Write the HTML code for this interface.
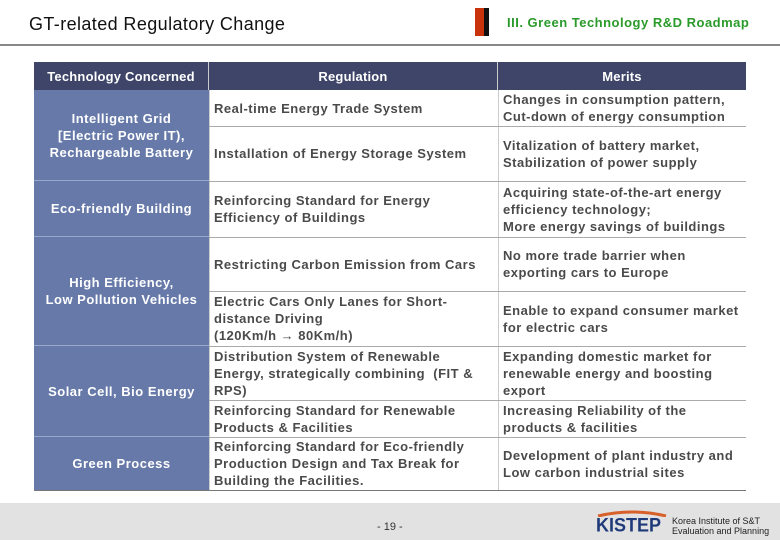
<!DOCTYPE html>
<html><head><meta charset="utf-8"><style>
body{margin:0;width:780px;height:540px;background:#fff;position:relative;overflow:hidden;font-family:"Liberation Sans",Arial,sans-serif}
.a{position:absolute}
.t{position:absolute;font-size:13px;font-weight:bold;color:#4a4a4a;line-height:17px;display:flex;align-items:center;letter-spacing:0.5px;white-space:nowrap}
.l{position:absolute;left:34px;width:175px;background:#6679a9;color:#fff;font-size:13px;font-weight:bold;line-height:17px;display:flex;align-items:center;justify-content:center;text-align:center;border-bottom:1px solid #9aa8c8;box-sizing:border-box;letter-spacing:0.5px}
.h{position:absolute;top:62px;height:28px;background:#3e4568;color:#fff;font-size:13px;font-weight:bold;display:flex;align-items:center;justify-content:center;letter-spacing:0.2px}
.hl{position:absolute;height:1px;background:#aaa}
</style></head><body>
<div class="a" style="left:29px;top:14px;font-size:18px;color:#111;letter-spacing:0.4px">GT-related Regulatory Change</div>
<div class="a" style="left:475px;top:8px;width:9px;height:28px;background:#c8330c"></div>
<div class="a" style="left:484px;top:8px;width:5px;height:28px;background:#111"></div>
<div class="a" style="left:507px;top:15px;font-size:13px;font-weight:bold;color:#2a9a2a;letter-spacing:0.5px">III. Green Technology R&amp;D Roadmap</div>
<div class="a" style="left:0;top:44px;width:780px;height:2px;background:#888"></div>

<div class="h" style="left:34px;width:174px">Technology Concerned</div>
<div class="h" style="left:209px;width:288px">Regulation</div>
<div class="h" style="left:498px;width:248px">Merits</div>
<div class="a" style="left:208px;top:62px;width:1px;height:28px;background:#ccc"></div>
<div class="a" style="left:497px;top:62px;width:1px;height:28px;background:#ccc"></div>

<div class="l" style="top:90px;height:91px">Intelligent Grid<br>[Electric Power IT),<br>Rechargeable Battery</div>
<div class="l" style="top:181px;height:56px">Eco-friendly Building</div>
<div class="l" style="top:237px;height:109px">High Efficiency,<br>Low Pollution Vehicles</div>
<div class="l" style="top:346px;height:91px">Solar Cell, Bio Energy</div>
<div class="l" style="top:437px;height:53px;border-bottom:none">Green Process</div>

<div class="a" style="left:209px;top:90px;width:1px;height:400px;background:#ccc"></div>
<div class="a" style="left:498px;top:90px;width:1px;height:400px;background:#ccc"></div>
<div class="hl" style="left:209px;top:126px;width:537px"></div>
<div class="hl" style="left:209px;top:181px;width:537px"></div>
<div class="hl" style="left:209px;top:237px;width:537px"></div>
<div class="hl" style="left:209px;top:291px;width:537px"></div>
<div class="hl" style="left:209px;top:346px;width:537px"></div>
<div class="hl" style="left:209px;top:400px;width:537px"></div>
<div class="hl" style="left:209px;top:437px;width:537px"></div>
<div class="a" style="left:34px;top:490px;width:712px;height:1px;background:#777"></div>

<div class="t" style="left:214px;top:90px;height:36px">Real-time Energy Trade System</div>
<div class="t" style="left:214px;top:126px;height:55px">Installation of Energy Storage System</div>
<div class="t" style="left:214px;top:181px;height:56px">Reinforcing Standard for Energy<br>Efficiency of Buildings</div>
<div class="t" style="left:214px;top:237px;height:54px">Restricting Carbon Emission from Cars</div>
<div class="t" style="left:214px;top:291px;height:55px">Electric Cars Only Lanes for Short-<br>distance Driving<br>(120Km/h → 80Km/h)</div>
<div class="t" style="left:214px;top:346px;height:54px">Distribution System of Renewable<br>Energy, strategically combining &nbsp;(FIT &amp;<br>RPS)</div>
<div class="t" style="left:214px;top:400px;height:37px">Reinforcing Standard for Renewable<br>Products &amp; Facilities</div>
<div class="t" style="left:214px;top:437px;height:53px">Reinforcing Standard for Eco-friendly<br>Production Design and Tax Break for<br>Building the Facilities.</div>

<div class="t" style="left:503px;top:90px;height:36px">Changes in consumption pattern,<br>Cut-down of energy consumption</div>
<div class="t" style="left:503px;top:126px;height:55px">Vitalization of battery market,<br>Stabilization of power supply</div>
<div class="t" style="left:503px;top:181px;height:56px">Acquiring state-of-the-art energy<br>efficiency technology;<br>More energy savings of buildings</div>
<div class="t" style="left:503px;top:237px;height:54px">No more trade barrier when<br>exporting cars to Europe</div>
<div class="t" style="left:503px;top:291px;height:55px">Enable to expand consumer market<br>for electric cars</div>
<div class="t" style="left:503px;top:346px;height:54px">Expanding domestic market for<br>renewable energy and boosting<br>export</div>
<div class="t" style="left:503px;top:400px;height:37px">Increasing Reliability of the<br>products &amp; facilities</div>
<div class="t" style="left:503px;top:437px;height:53px">Development of plant industry and<br>Low carbon industrial sites</div>

<div class="a" style="left:0;top:503px;width:780px;height:37px;background:#e2e2e2"></div>
<div class="a" style="left:377px;top:521px;font-size:11px;color:#333">- 19 -</div>
<svg class="a" style="left:596px;top:509px" width="72" height="8"><path d="M2 7 Q36 -1 70 7" stroke="#d8602a" stroke-width="3" fill="none"/></svg>
<div class="a" style="left:596px;top:514px;font-size:18px;font-weight:bold;color:#1f3a7a;transform:scaleY(1.1);transform-origin:top left">KISTEP</div>
<div class="a" style="left:672px;top:516px;font-size:9px;line-height:10px;color:#222">Korea Institute of S&amp;T<br>Evaluation and Planning</div>
</body></html>
